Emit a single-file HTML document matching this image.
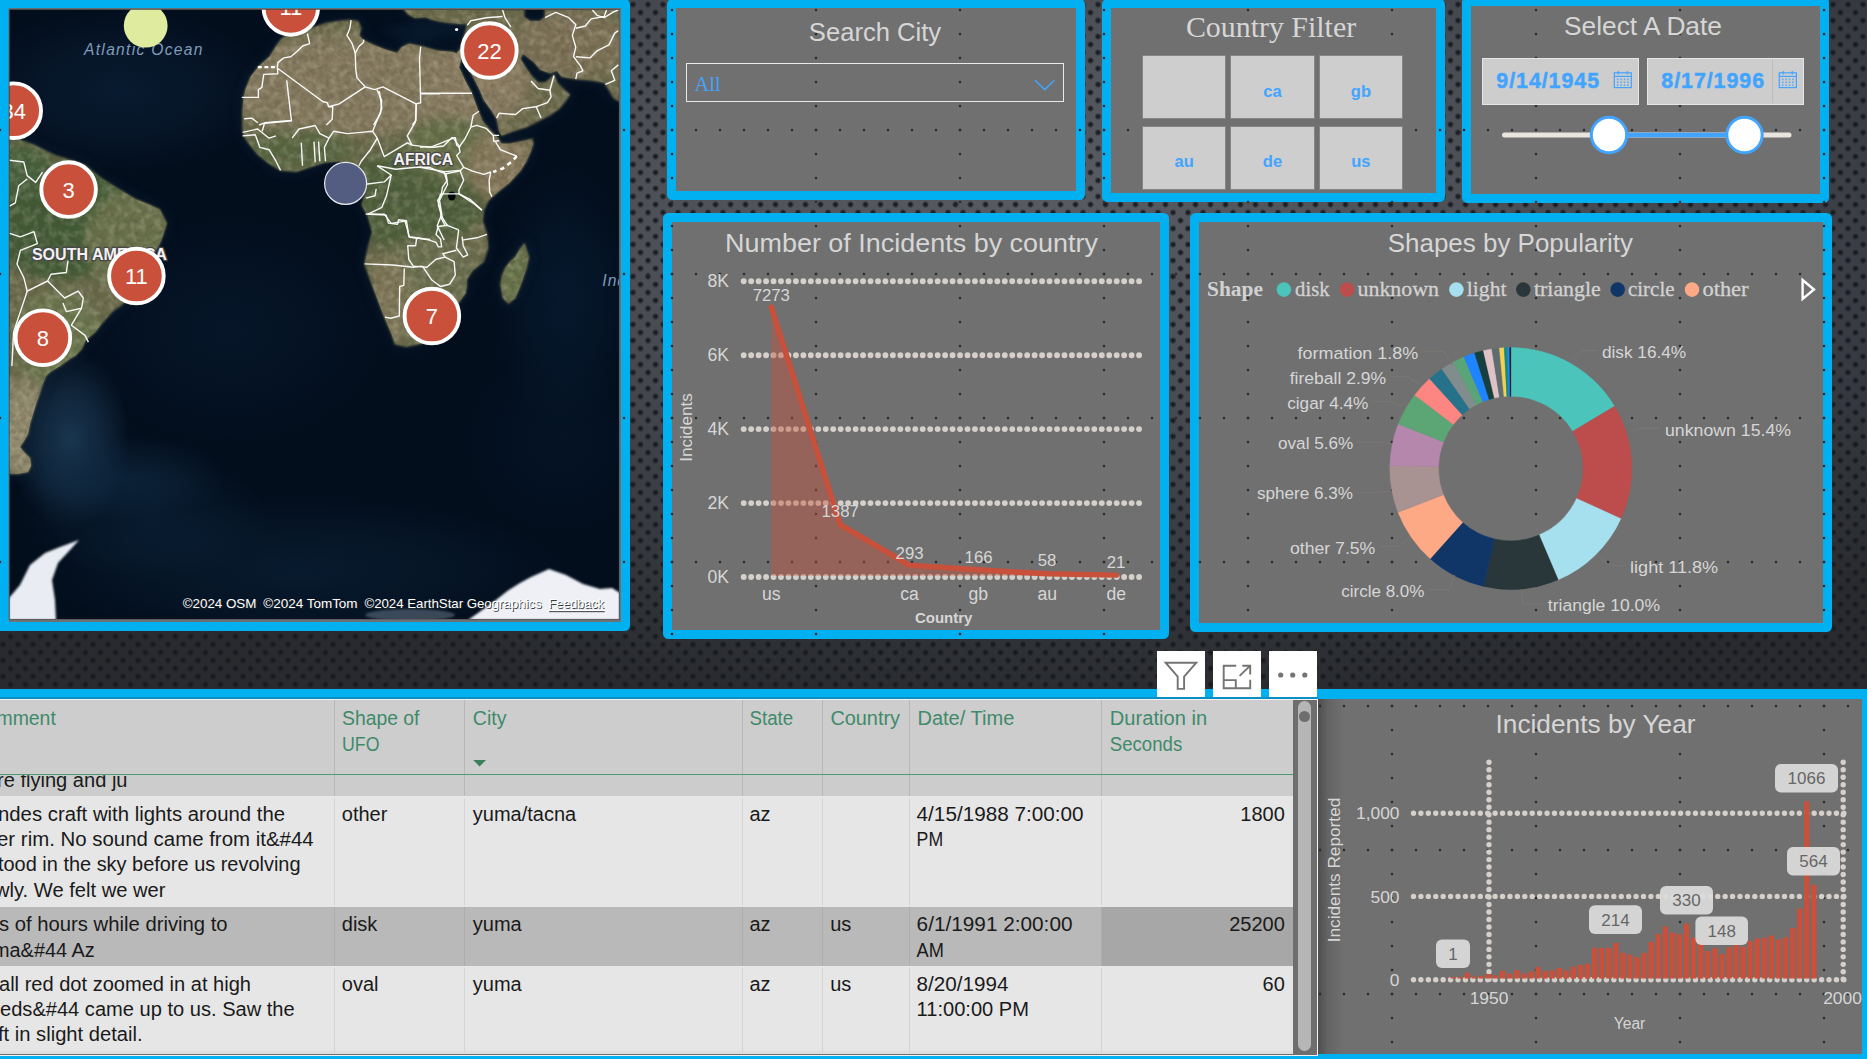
<!DOCTYPE html>
<html lang="en"><head><meta charset="utf-8"><title>UFO Sightings Dashboard</title>
<style>
html,body{margin:0;padding:0}
body{width:1867px;height:1059px;overflow:hidden;position:relative;background:#33363b;font-family:"Liberation Sans",sans-serif;color:#d8d8d8}
.abs{position:absolute}
.bg{position:absolute;left:0;top:0;width:1867px;height:1059px;
 background:
  radial-gradient(circle at 3px 4.5px,rgba(22,25,30,.95) 0,rgba(22,25,30,.86) 1.5px,rgba(22,25,30,0) 3.6px),
  radial-gradient(circle at 10.5px 12.5px,rgba(22,25,30,.95) 0,rgba(22,25,30,.86) 1.5px,rgba(22,25,30,0) 3.6px),
  radial-gradient(ellipse 1250px 520px at 1050px 190px,#585b61 0,#4c4f55 35%,#383b41 70%,#282a2e 100%);
 background-size:15px 16px,15px 16px,100% 100%;}
.panel{position:absolute;box-sizing:border-box;background:#707070;border:9.5px solid #00b0f0;border-radius:5.5px}
.grid{position:absolute;left:0;top:0;width:1867px;height:1059px;pointer-events:none;
 background:
  radial-gradient(circle at 96px 10px,#2b2b2b 0,#2b2b2b 0.85px,rgba(43,43,43,0) 1.7px),
  radial-gradient(circle at 12px 130px,#2b2b2b 0,#2b2b2b 0.85px,rgba(43,43,43,0) 1.7px);
 background-size:144px 24px,24px 144px;background-position:0 0,-12px 0}
.t{position:absolute;white-space:nowrap;color:#d6d6d6;line-height:1}
.serif{font-family:"Liberation Serif",serif}
svg{position:absolute;left:0;top:0;overflow:visible}
svg text{font-family:"Liberation Sans",sans-serif}
</style></head><body>
<div class="bg"></div>
<div class="panel" style="left:-10px;top:-0.9px;width:639.5px;height:631.4px;border-left-width:19.6px"></div>
<div class="panel" style="left:666.5px;top:-1.4px;width:418.5px;height:200.9px"></div>
<div class="panel" style="left:1101.5px;top:-1.4px;width:343.0px;height:202.9px"></div>
<div class="panel" style="left:1461.5px;top:-2.8px;width:367.8px;height:205.8px"></div>
<div class="panel" style="left:662.5px;top:213.3px;width:506.5px;height:425.7px"></div>
<div class="panel" style="left:1190px;top:213.3px;width:642.2px;height:418.7px"></div>
<div class="abs" style="left:0;top:688.5px;width:1867px;height:371px;background:#00b0f0"></div>
<div class="abs" style="left:1318px;top:698.5px;width:544px;height:355.8px;background:linear-gradient(90deg,#4e4e4e 0,#646464 10px,#707070 26px)"></div>
<div class="grid"></div>
<div class="t" style="left:675px;top:17px;width:400px;text-align:center;font-size:25.6px;line-height:30px">Search City</div>
<div class="abs" style="left:686px;top:62.5px;width:378px;height:39px;box-sizing:border-box;border:1.5px solid #e9e9e9"></div>
<div class="t serif" style="left:694.5px;top:72px;font-size:20.5px;line-height:24px;color:#41a4ff">All</div>
<svg width="1867" height="220"><polyline points="1035,80.3 1044.7,89.6 1054.4,80.3" fill="none" stroke="#41a4ff" stroke-width="1.5"/></svg>
<div class="t serif" style="left:1108.5px;top:8.6px;width:325px;text-align:center;font-size:29.9px;line-height:36px">Country Filter</div>
<div class="abs" style="left:1141.8px;top:54.5px;width:84.6px;height:64.5px;box-sizing:border-box;border:1px solid #878583;background:#cecece;color:#41a4ff;font-weight:bold;font-size:16.5px;text-align:center;line-height:20px;padding-top:25px"></div>
<div class="abs" style="left:1229.7px;top:54.5px;width:85.6px;height:64.5px;box-sizing:border-box;border:1px solid #878583;background:#cecece;color:#41a4ff;font-weight:bold;font-size:16.5px;text-align:center;line-height:20px;padding-top:25px">ca</div>
<div class="abs" style="left:1318.9px;top:54.5px;width:84.0px;height:64.5px;box-sizing:border-box;border:1px solid #878583;background:#cecece;color:#41a4ff;font-weight:bold;font-size:16.5px;text-align:center;line-height:20px;padding-top:25px">gb</div>
<div class="abs" style="left:1141.8px;top:125.9px;width:84.6px;height:64.1px;box-sizing:border-box;border:1px solid #878583;background:#cecece;color:#41a4ff;font-weight:bold;font-size:16.5px;text-align:center;line-height:20px;padding-top:24px">au</div>
<div class="abs" style="left:1229.7px;top:125.9px;width:85.6px;height:64.1px;box-sizing:border-box;border:1px solid #878583;background:#cecece;color:#41a4ff;font-weight:bold;font-size:16.5px;text-align:center;line-height:20px;padding-top:24px">de</div>
<div class="abs" style="left:1318.9px;top:125.9px;width:84.0px;height:64.1px;box-sizing:border-box;border:1px solid #878583;background:#cecece;color:#41a4ff;font-weight:bold;font-size:16.5px;text-align:center;line-height:20px;padding-top:24px">us</div>
<div class="t" style="left:1471px;top:11px;width:344px;text-align:center;font-size:26.3px;line-height:30px">Select A Date</div>
<div class="abs" style="left:1482px;top:57.8px;width:157.0px;height:47.2px;box-sizing:border-box;border:1.5px solid #e6e6e6;background:#cdcdcd"></div>
<div class="t" style="left:1496.3px;top:68px;font-size:21.4px;line-height:26px;font-weight:bold;letter-spacing:0.95px;-webkit-text-stroke:0.45px #41a4ff;color:#41a4ff">9/14/1945</div>
<div class="abs" style="left:1647px;top:57.8px;width:157.3px;height:47.2px;box-sizing:border-box;border:1.5px solid #e6e6e6;background:#cdcdcd"></div>
<div class="t" style="left:1661.3px;top:68px;font-size:21.4px;line-height:26px;font-weight:bold;letter-spacing:0.95px;-webkit-text-stroke:0.45px #41a4ff;color:#41a4ff">8/17/1996</div>
<div class="abs" style="left:1772px;top:59.3px;width:1px;height:44.2px;background:#bdbdbd"></div>
<svg width="1867" height="220"><g stroke="#41a4ff" fill="none" stroke-width="1.2"><rect x="1614.3" y="72.8" width="17" height="14.8"/><line x1="1614.3" y1="76.4" x2="1631.3" y2="76.4"/><line x1="1618.3" y1="71" x2="1618.3" y2="74.6"/><line x1="1627.3" y1="71" x2="1627.3" y2="74.6"/></g><rect x="1616.9" y="78.6" width="1.6" height="1.6" fill="#41a4ff" opacity=".85"/><rect x="1620.3" y="78.6" width="1.6" height="1.6" fill="#41a4ff" opacity=".85"/><rect x="1623.7" y="78.6" width="1.6" height="1.6" fill="#41a4ff" opacity=".85"/><rect x="1627.1" y="78.6" width="1.6" height="1.6" fill="#41a4ff" opacity=".85"/><rect x="1616.9" y="81.5" width="1.6" height="1.6" fill="#41a4ff" opacity=".85"/><rect x="1620.3" y="81.5" width="1.6" height="1.6" fill="#41a4ff" opacity=".85"/><rect x="1623.7" y="81.5" width="1.6" height="1.6" fill="#41a4ff" opacity=".85"/><rect x="1627.1" y="81.5" width="1.6" height="1.6" fill="#41a4ff" opacity=".85"/><rect x="1616.9" y="84.4" width="1.6" height="1.6" fill="#41a4ff" opacity=".85"/><rect x="1620.3" y="84.4" width="1.6" height="1.6" fill="#41a4ff" opacity=".85"/><rect x="1623.7" y="84.4" width="1.6" height="1.6" fill="#41a4ff" opacity=".85"/><rect x="1627.1" y="84.4" width="1.6" height="1.6" fill="#41a4ff" opacity=".85"/><g stroke="#41a4ff" fill="none" stroke-width="1.2"><rect x="1779.3" y="72.8" width="17" height="14.8"/><line x1="1779.3" y1="76.4" x2="1796.3" y2="76.4"/><line x1="1783.3" y1="71" x2="1783.3" y2="74.6"/><line x1="1792.3" y1="71" x2="1792.3" y2="74.6"/></g><rect x="1781.9" y="78.6" width="1.6" height="1.6" fill="#41a4ff" opacity=".85"/><rect x="1785.3" y="78.6" width="1.6" height="1.6" fill="#41a4ff" opacity=".85"/><rect x="1788.7" y="78.6" width="1.6" height="1.6" fill="#41a4ff" opacity=".85"/><rect x="1792.1" y="78.6" width="1.6" height="1.6" fill="#41a4ff" opacity=".85"/><rect x="1781.9" y="81.5" width="1.6" height="1.6" fill="#41a4ff" opacity=".85"/><rect x="1785.3" y="81.5" width="1.6" height="1.6" fill="#41a4ff" opacity=".85"/><rect x="1788.7" y="81.5" width="1.6" height="1.6" fill="#41a4ff" opacity=".85"/><rect x="1792.1" y="81.5" width="1.6" height="1.6" fill="#41a4ff" opacity=".85"/><rect x="1781.9" y="84.4" width="1.6" height="1.6" fill="#41a4ff" opacity=".85"/><rect x="1785.3" y="84.4" width="1.6" height="1.6" fill="#41a4ff" opacity=".85"/><rect x="1788.7" y="84.4" width="1.6" height="1.6" fill="#41a4ff" opacity=".85"/><rect x="1792.1" y="84.4" width="1.6" height="1.6" fill="#41a4ff" opacity=".85"/><line x1="1504.5" y1="135" x2="1789" y2="135" stroke="#e9e4dd" stroke-width="5" stroke-linecap="round"/><line x1="1609" y1="135" x2="1744.5" y2="135" stroke="#41a4ff" stroke-width="4.6"/><circle cx="1609" cy="135" r="17.7" fill="#ffffff" stroke="#41a4ff" stroke-width="3"/><circle cx="1744.5" cy="135" r="17.7" fill="#ffffff" stroke="#41a4ff" stroke-width="3"/></svg>
<svg width="1867" height="700"><line x1="743.7" y1="577.0" x2="1143" y2="577.0" stroke="#d5d0c9" stroke-width="5.9" stroke-linecap="round" stroke-dasharray="0 7.46"/><text x="729" y="582.9" text-anchor="end" font-size="17.6" fill="#d6d6d6">0K</text><line x1="743.7" y1="503.1" x2="1143" y2="503.1" stroke="#d5d0c9" stroke-width="5.9" stroke-linecap="round" stroke-dasharray="0 7.46"/><text x="729" y="509.0" text-anchor="end" font-size="17.6" fill="#d6d6d6">2K</text><line x1="743.7" y1="429.1" x2="1143" y2="429.1" stroke="#d5d0c9" stroke-width="5.9" stroke-linecap="round" stroke-dasharray="0 7.46"/><text x="729" y="435.0" text-anchor="end" font-size="17.6" fill="#d6d6d6">4K</text><line x1="743.7" y1="355.2" x2="1143" y2="355.2" stroke="#d5d0c9" stroke-width="5.9" stroke-linecap="round" stroke-dasharray="0 7.46"/><text x="729" y="361.09999999999997" text-anchor="end" font-size="17.6" fill="#d6d6d6">6K</text><line x1="743.7" y1="281.3" x2="1143" y2="281.3" stroke="#d5d0c9" stroke-width="5.9" stroke-linecap="round" stroke-dasharray="0 7.46"/><text x="729" y="287.2" text-anchor="end" font-size="17.6" fill="#d6d6d6">8K</text><polygon points="771.3,575.8 771.3,307.1 840.3,524.6 909.3,565.1 978.3,569.8 1047.3,573.8 1116.3,575.1 1116.3,575.8" fill="#c9503a" fill-opacity="0.42"/><polyline points="771.3,307.1 840.3,524.6 909.3,565.1 978.3,569.8 1047.3,573.8 1116.3,575.1" fill="none" stroke="#c9503a" stroke-width="5.4" stroke-linecap="round" stroke-linejoin="round"/><text x="771.3" y="300.7" text-anchor="middle" font-size="16.8" fill="#d6d6d6">7273</text><text x="840.2" y="517.4" text-anchor="middle" font-size="16.8" fill="#d6d6d6">1387</text><text x="909.6" y="558.9" text-anchor="middle" font-size="16.8" fill="#d6d6d6">293</text><text x="978.6" y="563" text-anchor="middle" font-size="16.8" fill="#d6d6d6">166</text><text x="1047" y="566.4" text-anchor="middle" font-size="16.8" fill="#d6d6d6">58</text><text x="1116" y="568.4" text-anchor="middle" font-size="16.8" fill="#d6d6d6">21</text><text x="771.3" y="599.9" text-anchor="middle" font-size="17.6" fill="#d6d6d6">us</text><text x="909.6" y="599.9" text-anchor="middle" font-size="17.6" fill="#d6d6d6">ca</text><text x="978.3" y="599.9" text-anchor="middle" font-size="17.6" fill="#d6d6d6">gb</text><text x="1047.3" y="599.9" text-anchor="middle" font-size="17.6" fill="#d6d6d6">au</text><text x="1116.3" y="599.9" text-anchor="middle" font-size="17.6" fill="#d6d6d6">de</text><text x="943.7" y="622.6" text-anchor="middle" font-size="15" font-weight="bold" fill="#d6d6d6">Country</text><text transform="translate(691.5,427.5) rotate(-90)" text-anchor="middle" font-size="16" textLength="68.6" lengthAdjust="spacingAndGlyphs" fill="#d6d6d6">Incidents</text><text x="911.5" y="251.6" text-anchor="middle" font-size="26" textLength="373" lengthAdjust="spacingAndGlyphs" fill="#d6d6d6">Number of Incidents by country</text></svg>
<svg width="1867" height="700"><path d="M1510.80,347.50 A121.0,121.0 0 0 1 1614.56,406.25 L1572.80,431.31 A72.3,72.3 0 0 0 1510.80,396.20 Z" fill="#4bc4bb" stroke="#4bc4bb" stroke-width="0.4"/><path d="M1614.56,406.25 A121.0,121.0 0 0 1 1620.92,518.64 L1576.60,498.46 A72.3,72.3 0 0 0 1572.80,431.31 Z" fill="#bc4d4c" stroke="#bc4d4c" stroke-width="0.4"/><path d="M1620.92,518.64 A121.0,121.0 0 0 1 1558.16,579.85 L1539.10,535.03 A72.3,72.3 0 0 0 1576.60,498.46 Z" fill="#a6e0ee" stroke="#a6e0ee" stroke-width="0.4"/><path d="M1558.16,579.85 A121.0,121.0 0 0 1 1483.66,586.42 L1494.59,538.96 A72.3,72.3 0 0 0 1539.10,535.03 Z" fill="#29363a" stroke="#29363a" stroke-width="0.4"/><path d="M1483.66,586.42 A121.0,121.0 0 0 1 1430.21,558.76 L1462.65,522.43 A72.3,72.3 0 0 0 1494.59,538.96 Z" fill="#103668" stroke="#103668" stroke-width="0.4"/><path d="M1430.21,558.76 A121.0,121.0 0 0 1 1398.02,512.34 L1443.41,494.69 A72.3,72.3 0 0 0 1462.65,522.43 Z" fill="#fea985" stroke="#fea985" stroke-width="0.4"/><path d="M1398.02,512.34 A121.0,121.0 0 0 1 1389.84,465.46 L1438.52,466.68 A72.3,72.3 0 0 0 1443.41,494.69 Z" fill="#a89292" stroke="#a89292" stroke-width="0.4"/><path d="M1389.84,465.46 A121.0,121.0 0 0 1 1398.30,423.96 L1443.58,441.88 A72.3,72.3 0 0 0 1438.52,466.68 Z" fill="#b687ad" stroke="#b687ad" stroke-width="0.4"/><path d="M1398.30,423.96 A121.0,121.0 0 0 1 1414.73,394.94 L1453.39,424.55 A72.3,72.3 0 0 0 1443.58,441.88 Z" fill="#5ca575" stroke="#5ca575" stroke-width="0.4"/><path d="M1414.73,394.94 A121.0,121.0 0 0 1 1429.65,378.75 L1462.31,414.87 A72.3,72.3 0 0 0 1453.39,424.55 Z" fill="#fd8683" stroke="#fd8683" stroke-width="0.4"/><path d="M1429.65,378.75 A121.0,121.0 0 0 1 1441.88,369.04 L1469.62,409.07 A72.3,72.3 0 0 0 1462.31,414.87 Z" fill="#26728a" stroke="#26728a" stroke-width="0.4"/><path d="M1441.88,369.04 A121.0,121.0 0 0 1 1453.58,361.88 L1476.61,404.79 A72.3,72.3 0 0 0 1469.62,409.07 Z" fill="#818c8c" stroke="#818c8c" stroke-width="0.4"/><path d="M1453.58,361.88 A121.0,121.0 0 0 1 1464.07,356.89 L1482.88,401.81 A72.3,72.3 0 0 0 1476.61,404.79 Z" fill="#5aa577" stroke="#5aa577" stroke-width="0.4"/><path d="M1464.07,356.89 A121.0,121.0 0 0 1 1474.58,353.05 L1489.16,399.52 A72.3,72.3 0 0 0 1482.88,401.81 Z" fill="#1e84ff" stroke="#1e84ff" stroke-width="0.4"/><path d="M1474.58,353.05 A121.0,121.0 0 0 1 1483.33,350.66 L1494.39,398.09 A72.3,72.3 0 0 0 1489.16,399.52 Z" fill="#173f3d" stroke="#173f3d" stroke-width="0.4"/><path d="M1483.33,350.66 A121.0,121.0 0 0 1 1491.83,349.00 L1499.46,397.09 A72.3,72.3 0 0 0 1494.39,398.09 Z" fill="#dfc2c6" stroke="#dfc2c6" stroke-width="0.4"/><path d="M1491.83,349.00 A121.0,121.0 0 0 1 1499.37,348.04 L1503.97,396.52 A72.3,72.3 0 0 0 1499.46,397.09 Z" fill="#5f6c70" stroke="#5f6c70" stroke-width="0.4"/><path d="M1499.37,348.04 A121.0,121.0 0 0 1 1504.21,347.68 L1506.86,396.31 A72.3,72.3 0 0 0 1503.97,396.52 Z" fill="#f2d054" stroke="#f2d054" stroke-width="0.4"/><path d="M1504.21,347.68 A121.0,121.0 0 0 1 1507.38,347.55 L1508.76,396.23 A72.3,72.3 0 0 0 1506.86,396.31 Z" fill="#148a7c" stroke="#148a7c" stroke-width="0.4"/><path d="M1507.38,347.55 A121.0,121.0 0 0 1 1509.70,347.50 L1510.14,396.20 A72.3,72.3 0 0 0 1508.76,396.23 Z" fill="#1a8cff" stroke="#1a8cff" stroke-width="0.4"/><path d="M1509.70,347.50 A121.0,121.0 0 0 1 1510.80,347.50 L1510.80,396.20 A72.3,72.3 0 0 0 1510.14,396.20 Z" fill="#111111" stroke="#111111" stroke-width="0.4"/><polyline points="1572.8,359.6 1581.1,350.5 1597.7,350.5" fill="none" stroke="#7b7774" stroke-width="1"/><polyline points="1631.0,431.5 1641.3,428.2 1660.0,428.2" fill="none" stroke="#7b7774" stroke-width="1"/><polyline points="1599.8,558.3 1610.2,565.8 1626.8,565.8" fill="none" stroke="#7b7774" stroke-width="1"/><polyline points="1521.6,589.5 1522.9,604.0 1543.7,604.0" fill="none" stroke="#7b7774" stroke-width="1"/><polyline points="1454.3,574.9 1449.3,589.5 1428.5,589.5" fill="none" stroke="#7b7774" stroke-width="1"/><polyline points="1407.8,539.6 1398.2,546.6 1379.5,546.6" fill="none" stroke="#7b7774" stroke-width="1"/><polyline points="1389.9,491.0 1375.3,492.6 1356.6,492.6" fill="none" stroke="#7b7774" stroke-width="1"/><polyline points="1392.0,444.0 1375.3,441.9 1356.6,441.9" fill="none" stroke="#7b7774" stroke-width="1"/><polyline points="1402.4,406.6 1389.9,401.6 1372.0,401.6" fill="none" stroke="#7b7774" stroke-width="1"/><polyline points="1420.2,384.6 1407.8,376.7 1389.9,376.7" fill="none" stroke="#7b7774" stroke-width="1"/><polyline points="1452.2,365.0 1443.9,351.3 1422.3,351.3" fill="none" stroke="#7b7774" stroke-width="1"/><text x="1601.9" y="357.5" font-size="16.8" textLength="84.3" lengthAdjust="spacingAndGlyphs" fill="#d6d6d6">disk 16.4%</text><text x="1665" y="435.7" font-size="16.8" textLength="126.0" lengthAdjust="spacingAndGlyphs" fill="#d6d6d6">unknown 15.4%</text><text x="1630.1" y="572.8" font-size="16.8" textLength="88.1" lengthAdjust="spacingAndGlyphs" fill="#d6d6d6">light 11.8%</text><text x="1547.8" y="611" font-size="16.8" textLength="112.2" lengthAdjust="spacingAndGlyphs" fill="#d6d6d6">triangle 10.0%</text><text x="1341.3" y="597" font-size="16.8" textLength="83.1" lengthAdjust="spacingAndGlyphs" fill="#d6d6d6">circle 8.0%</text><text x="1290" y="554" font-size="16.8" textLength="85.3" lengthAdjust="spacingAndGlyphs" fill="#d6d6d6">other 7.5%</text><text x="1257" y="499.3" font-size="16.8" textLength="96.0" lengthAdjust="spacingAndGlyphs" fill="#d6d6d6">sphere 6.3%</text><text x="1278" y="449" font-size="16.8" textLength="75.3" lengthAdjust="spacingAndGlyphs" fill="#d6d6d6">oval 5.6%</text><text x="1287.2" y="408.7" font-size="16.8" textLength="81.1" lengthAdjust="spacingAndGlyphs" fill="#d6d6d6">cigar 4.4%</text><text x="1289.7" y="383.7" font-size="16.8" textLength="96.5" lengthAdjust="spacingAndGlyphs" fill="#d6d6d6">fireball 2.9%</text><text x="1297.6" y="358.8" font-size="16.8" textLength="120.6" lengthAdjust="spacingAndGlyphs" fill="#d6d6d6">formation 1.8%</text><text x="1207" y="295.5" font-size="20.5" font-weight="bold" textLength="56" lengthAdjust="spacingAndGlyphs" fill="#d2d2d2" style="font-family:'Liberation Serif',serif">Shape</text><circle cx="1283.9" cy="289.6" r="7.3" fill="#4bc4bb"/><text x="1295.1" y="296" font-size="21" textLength="34.5" lengthAdjust="spacingAndGlyphs" fill="#d2d2d2" stroke="#d2d2d2" stroke-width=".3" style="font-family:'Liberation Serif',serif">disk</text><circle cx="1347" cy="289.6" r="7.3" fill="#bc4d4c"/><text x="1357.5" y="296" font-size="21" textLength="81.5" lengthAdjust="spacingAndGlyphs" fill="#d2d2d2" stroke="#d2d2d2" stroke-width=".3" style="font-family:'Liberation Serif',serif">unknown</text><circle cx="1456.4" cy="289.6" r="7.3" fill="#a6e0ee"/><text x="1466.8" y="296" font-size="21" textLength="39.7" lengthAdjust="spacingAndGlyphs" fill="#d2d2d2" stroke="#d2d2d2" stroke-width=".3" style="font-family:'Liberation Serif',serif">light</text><circle cx="1523.3" cy="289.6" r="7.3" fill="#29363a"/><text x="1534" y="296" font-size="21" textLength="66.7" lengthAdjust="spacingAndGlyphs" fill="#d2d2d2" stroke="#d2d2d2" stroke-width=".3" style="font-family:'Liberation Serif',serif">triangle</text><circle cx="1617.7" cy="289.6" r="7.3" fill="#103668"/><text x="1628" y="296" font-size="21" textLength="46.5" lengthAdjust="spacingAndGlyphs" fill="#d2d2d2" stroke="#d2d2d2" stroke-width=".3" style="font-family:'Liberation Serif',serif">circle</text><circle cx="1692" cy="289.6" r="7.3" fill="#fea985"/><text x="1702.4" y="296" font-size="21" textLength="46.2" lengthAdjust="spacingAndGlyphs" fill="#d2d2d2" stroke="#d2d2d2" stroke-width=".3" style="font-family:'Liberation Serif',serif">other</text><path d="M1802.6,280 L1814,289.5 L1802.6,299 Z" fill="none" stroke="#ffffff" stroke-width="2.4" stroke-linejoin="miter"/><text x="1510.4" y="251.6" text-anchor="middle" font-size="26" textLength="245.3" lengthAdjust="spacingAndGlyphs" fill="#d6d6d6">Shapes by Popularity</text></svg>
<div class="abs" style="left:0;top:697.2px;width:1318px;height:1.4px;background:#0a8fc5"></div>
<div class="abs" style="left:-2px;top:698.6px;width:1320.2px;height:357px;box-sizing:border-box;border:1.6px solid #f2f2f2;background:#6e6e6e"></div>
<div class="abs" style="left:0;top:700.2px;width:1293.2px;height:73.8px;background:#cdcdcd"></div>
<div class="abs" style="left:0;top:774.0px;width:1293.2px;height:22.0px;background:#cccccc"></div>
<div class="abs" style="left:0;top:796.0px;width:1293.2px;height:110.8px;background:#e6e6e6"></div>
<div class="abs" style="left:0;top:906.8px;width:1293.2px;height:58.9px;background:#b9b9b9"></div>
<div class="abs" style="left:0;top:965.7px;width:1293.2px;height:88.3px;background:#e6e6e6"></div>
<div class="abs" style="left:1101.4px;top:906.8px;width:191.8px;height:58.9px;background:#a7a7a7"></div>
<div class="abs" style="left:0;top:1050.5px;width:1293.2px;height:3.5px;background:#dedede"></div>
<div class="abs" style="left:333.9px;top:700.2px;width:1px;height:96px;background:#b7b7b7"></div>
<div class="abs" style="left:333.9px;top:799px;width:1px;height:106px;background:#d3d3d3"></div>
<div class="abs" style="left:333.9px;top:906.8px;width:1px;height:58.9px;background:#adadad"></div>
<div class="abs" style="left:333.9px;top:968px;width:1px;height:84px;background:#d3d3d3"></div>
<div class="abs" style="left:463.7px;top:700.2px;width:1px;height:96px;background:#b7b7b7"></div>
<div class="abs" style="left:463.7px;top:799px;width:1px;height:106px;background:#d3d3d3"></div>
<div class="abs" style="left:463.7px;top:906.8px;width:1px;height:58.9px;background:#adadad"></div>
<div class="abs" style="left:463.7px;top:968px;width:1px;height:84px;background:#d3d3d3"></div>
<div class="abs" style="left:741.5px;top:700.2px;width:1px;height:96px;background:#b7b7b7"></div>
<div class="abs" style="left:741.5px;top:799px;width:1px;height:106px;background:#d3d3d3"></div>
<div class="abs" style="left:741.5px;top:906.8px;width:1px;height:58.9px;background:#adadad"></div>
<div class="abs" style="left:741.5px;top:968px;width:1px;height:84px;background:#d3d3d3"></div>
<div class="abs" style="left:822.0px;top:700.2px;width:1px;height:96px;background:#b7b7b7"></div>
<div class="abs" style="left:822.0px;top:799px;width:1px;height:106px;background:#d3d3d3"></div>
<div class="abs" style="left:822.0px;top:906.8px;width:1px;height:58.9px;background:#adadad"></div>
<div class="abs" style="left:822.0px;top:968px;width:1px;height:84px;background:#d3d3d3"></div>
<div class="abs" style="left:909.0px;top:700.2px;width:1px;height:96px;background:#b7b7b7"></div>
<div class="abs" style="left:909.0px;top:799px;width:1px;height:106px;background:#d3d3d3"></div>
<div class="abs" style="left:909.0px;top:906.8px;width:1px;height:58.9px;background:#adadad"></div>
<div class="abs" style="left:909.0px;top:968px;width:1px;height:84px;background:#d3d3d3"></div>
<div class="abs" style="left:1100.9px;top:700.2px;width:1px;height:96px;background:#b7b7b7"></div>
<div class="abs" style="left:1100.9px;top:799px;width:1px;height:106px;background:#d3d3d3"></div>
<div class="abs" style="left:1100.9px;top:906.8px;width:1px;height:58.9px;background:#adadad"></div>
<div class="abs" style="left:1100.9px;top:968px;width:1px;height:84px;background:#d3d3d3"></div>
<div class="abs" style="left:0;top:773.8px;width:1293.2px;height:1.3px;background:#4f9b6f"></div>
<div class="abs" style="left:1298px;top:700.5px;width:13.4px;height:350px;background:#b6b6b6;border-radius:6.5px"></div>
<div class="abs" style="left:1299.2px;top:710.6px;width:11px;height:11px;background:#6e6e6e;border-radius:50%"></div>
<svg width="1294" height="1059" viewBox="0 0 1294 1059" style="overflow:hidden"><defs><clipPath id="r1clip"><rect x="0" y="775.2" width="1294" height="30"/></clipPath></defs><text x="-3.5" y="724.8" font-size="19.4" fill="#3f8a6a" textLength="59.3" lengthAdjust="spacingAndGlyphs">mment</text><text x="342" y="724.8" font-size="19.4" fill="#3f8a6a" textLength="77.5" lengthAdjust="spacingAndGlyphs">Shape of</text><text x="342" y="751.3" font-size="19.4" fill="#3f8a6a" textLength="37.5" lengthAdjust="spacingAndGlyphs">UFO</text><text x="472.8" y="724.8" font-size="19.4" fill="#3f8a6a" textLength="33.7" lengthAdjust="spacingAndGlyphs">City</text><text x="749.6" y="724.8" font-size="19.4" fill="#3f8a6a" textLength="43.6" lengthAdjust="spacingAndGlyphs">State</text><text x="830.4" y="724.8" font-size="19.4" fill="#3f8a6a" textLength="69.6" lengthAdjust="spacingAndGlyphs">Country</text><text x="917.4" y="724.8" font-size="19.4" fill="#3f8a6a" textLength="97.0" lengthAdjust="spacingAndGlyphs">Date/ Time</text><text x="1109.8" y="724.8" font-size="19.4" fill="#3f8a6a" textLength="97.3" lengthAdjust="spacingAndGlyphs">Duration in</text><text x="1109.8" y="751.3" font-size="19.4" fill="#3f8a6a" textLength="72.4" lengthAdjust="spacingAndGlyphs">Seconds</text><path d="M473.2,760 L486,760 L479.6,766.4 Z" fill="#3d7f5c"/><text x="-3" y="786.8" font-size="20" fill="#1a1a1a" textLength="130.5" lengthAdjust="spacingAndGlyphs" clip-path="url(#r1clip)">re flying and ju</text><text x="-2" y="821" font-size="20" fill="#1a1a1a" textLength="287.0" lengthAdjust="spacingAndGlyphs">ndes craft with lights around the</text><text x="-3" y="846.4" font-size="20" fill="#1a1a1a" textLength="316.6" lengthAdjust="spacingAndGlyphs">er rim. No sound came from it&amp;#44</text><text x="-2" y="871.4" font-size="20" fill="#1a1a1a" textLength="302.5" lengthAdjust="spacingAndGlyphs">tood in the sky before us revolving</text><text x="-5" y="896.6" font-size="20" fill="#1a1a1a" textLength="170.4" lengthAdjust="spacingAndGlyphs">wly. We felt we wer</text><text x="-1" y="931.3" font-size="20" fill="#1a1a1a" textLength="228.6" lengthAdjust="spacingAndGlyphs">s of hours while driving to</text><text x="-7" y="956.5" font-size="20" fill="#1a1a1a" textLength="101.7" lengthAdjust="spacingAndGlyphs">ma&amp;#44 Az</text><text x="-1" y="991" font-size="20" fill="#1a1a1a" textLength="252.0" lengthAdjust="spacingAndGlyphs">all red dot zoomed in at high</text><text x="0" y="1016.2" font-size="20" fill="#1a1a1a" textLength="294.7" lengthAdjust="spacingAndGlyphs">eds&amp;#44 came up to us. Saw the</text><text x="-2" y="1040.8" font-size="20" fill="#1a1a1a" textLength="144.6" lengthAdjust="spacingAndGlyphs">ft in slight detail.</text><text x="341.8" y="821" font-size="20" fill="#1a1a1a" text-anchor="start">other</text><text x="472.8" y="821" font-size="20" fill="#1a1a1a" text-anchor="start">yuma/tacna</text><text x="749.4" y="821" font-size="20" fill="#1a1a1a" text-anchor="start">az</text><text x="916.6" y="821" font-size="20" fill="#1a1a1a" textLength="167" lengthAdjust="spacingAndGlyphs">4/15/1988 7:00:00</text><text x="916.6" y="846.2" font-size="20" fill="#1a1a1a" textLength="26.5" lengthAdjust="spacingAndGlyphs">PM</text><text x="1284.8" y="821" font-size="20" fill="#1a1a1a" text-anchor="end">1800</text><text x="341.8" y="931.3" font-size="20" fill="#1a1a1a" text-anchor="start">disk</text><text x="472.8" y="931.3" font-size="20" fill="#1a1a1a" text-anchor="start">yuma</text><text x="749.4" y="931.3" font-size="20" fill="#1a1a1a" text-anchor="start">az</text><text x="830.2" y="931.3" font-size="20" fill="#1a1a1a" text-anchor="start">us</text><text x="916.6" y="931.3" font-size="20" fill="#1a1a1a" textLength="155.9" lengthAdjust="spacingAndGlyphs">6/1/1991 2:00:00</text><text x="916.6" y="956.5" font-size="20" fill="#1a1a1a" textLength="27.3" lengthAdjust="spacingAndGlyphs">AM</text><text x="1284.8" y="931.3" font-size="20" fill="#1a1a1a" text-anchor="end">25200</text><text x="341.8" y="991" font-size="20" fill="#1a1a1a" text-anchor="start">oval</text><text x="472.8" y="991" font-size="20" fill="#1a1a1a" text-anchor="start">yuma</text><text x="749.4" y="991" font-size="20" fill="#1a1a1a" text-anchor="start">az</text><text x="830.2" y="991" font-size="20" fill="#1a1a1a" text-anchor="start">us</text><text x="916.6" y="991" font-size="20" fill="#1a1a1a" textLength="91.8" lengthAdjust="spacingAndGlyphs">8/20/1994</text><text x="916.6" y="1016.2" font-size="20" fill="#1a1a1a" textLength="112.4" lengthAdjust="spacingAndGlyphs">11:00:00 PM</text><text x="1284.8" y="991" font-size="20" fill="#1a1a1a" text-anchor="end">60</text></svg>
<div class="abs" style="left:1156.8px;top:651px;width:48.2px;height:45.8px;background:#ffffff"></div>
<div class="abs" style="left:1213px;top:651px;width:48.2px;height:45.8px;background:#ffffff"></div>
<div class="abs" style="left:1269px;top:651px;width:48.2px;height:45.8px;background:#ffffff"></div>
<svg width="1867" height="700"><g fill="none" stroke="#747474" stroke-width="1.9"><path d="M1165.6,662.7 L1196.3,662.7 L1184.1,676.6 L1184.1,688.9 L1177.7,688.9 L1177.7,676.6 Z" stroke-linejoin="miter"/><path d="M1236.2,665.8 L1223.7,665.8 L1223.7,688.2 L1250.2,688.2 L1250.2,679.7"/><path d="M1223.7,680.1 L1235.8,680.1 L1235.8,688.2"/><path d="M1239.6,675.9 L1250,665.9 M1242.3,665.8 L1250.2,665.8 L1250.2,674.5"/></g><g fill="#747474"><circle cx="1280.7" cy="675" r="2.6"/><circle cx="1292.7" cy="675" r="2.6"/><circle cx="1304.8" cy="675" r="2.6"/></g></svg>
<svg width="1867" height="1059"><line x1="1413.5" y1="979.7" x2="1844" y2="979.7" stroke="#d5d0c9" stroke-width="5.4" stroke-linecap="round" stroke-dasharray="0 7.42"/><text x="1399.5" y="985.9000000000001" text-anchor="end" font-size="17.4" fill="#d6d6d6">0</text><line x1="1413.5" y1="896.4" x2="1844" y2="896.4" stroke="#d5d0c9" stroke-width="5.4" stroke-linecap="round" stroke-dasharray="0 7.42"/><text x="1399.5" y="902.6" text-anchor="end" font-size="17.4" fill="#d6d6d6">500</text><line x1="1413.5" y1="813.2" x2="1844" y2="813.2" stroke="#d5d0c9" stroke-width="5.4" stroke-linecap="round" stroke-dasharray="0 7.42"/><text x="1399.5" y="819.4000000000001" text-anchor="end" font-size="17.4" fill="#d6d6d6">1,000</text><line x1="1489.0" y1="762.3" x2="1489.0" y2="979.7" stroke="#d5d0c9" stroke-width="5.4" stroke-linecap="round" stroke-dasharray="0 7.483"/><line x1="1843.2" y1="762.3" x2="1843.2" y2="979.7" stroke="#d5d0c9" stroke-width="5.4" stroke-linecap="round" stroke-dasharray="0 7.483"/><rect x="1450.48" y="977.00" width="5.3" height="1.50" fill="#c9503a"/><rect x="1457.56" y="977.00" width="5.3" height="1.50" fill="#c9503a"/><rect x="1464.63" y="972.80" width="5.3" height="5.70" fill="#c9503a"/><rect x="1471.70" y="976.70" width="5.3" height="1.80" fill="#c9503a"/><rect x="1478.78" y="975.90" width="5.3" height="2.60" fill="#c9503a"/><rect x="1485.85" y="974.00" width="5.3" height="4.50" fill="#c9503a"/><rect x="1492.92" y="975.20" width="5.3" height="3.30" fill="#c9503a"/><rect x="1500.00" y="970.80" width="5.3" height="7.70" fill="#c9503a"/><rect x="1507.07" y="973.50" width="5.3" height="5.00" fill="#c9503a"/><rect x="1514.14" y="970.10" width="5.3" height="8.40" fill="#c9503a"/><rect x="1521.21" y="973.50" width="5.3" height="5.00" fill="#c9503a"/><rect x="1528.29" y="971.70" width="5.3" height="6.80" fill="#c9503a"/><rect x="1535.36" y="967.00" width="5.3" height="11.50" fill="#c9503a"/><rect x="1542.43" y="971.10" width="5.3" height="7.40" fill="#c9503a"/><rect x="1549.51" y="970.30" width="5.3" height="8.20" fill="#c9503a"/><rect x="1556.58" y="967.90" width="5.3" height="10.60" fill="#c9503a"/><rect x="1563.65" y="970.50" width="5.3" height="8.00" fill="#c9503a"/><rect x="1570.73" y="966.70" width="5.3" height="11.80" fill="#c9503a"/><rect x="1577.80" y="964.80" width="5.3" height="13.70" fill="#c9503a"/><rect x="1584.87" y="963.80" width="5.3" height="14.70" fill="#c9503a"/><rect x="1591.94" y="947.90" width="5.3" height="30.60" fill="#c9503a"/><rect x="1599.02" y="947.90" width="5.3" height="30.60" fill="#c9503a"/><rect x="1606.09" y="947.90" width="5.3" height="30.60" fill="#c9503a"/><rect x="1613.16" y="942.90" width="5.3" height="35.60" fill="#c9503a"/><rect x="1620.24" y="952.80" width="5.3" height="25.70" fill="#c9503a"/><rect x="1627.31" y="954.70" width="5.3" height="23.80" fill="#c9503a"/><rect x="1634.38" y="957.20" width="5.3" height="21.30" fill="#c9503a"/><rect x="1641.46" y="952.80" width="5.3" height="25.70" fill="#c9503a"/><rect x="1648.53" y="941.90" width="5.3" height="36.60" fill="#c9503a"/><rect x="1655.60" y="934.00" width="5.3" height="44.50" fill="#c9503a"/><rect x="1662.67" y="926.50" width="5.3" height="52.00" fill="#c9503a"/><rect x="1669.75" y="932.50" width="5.3" height="46.00" fill="#c9503a"/><rect x="1676.82" y="934.20" width="5.3" height="44.30" fill="#c9503a"/><rect x="1683.89" y="923.60" width="5.3" height="54.90" fill="#c9503a"/><rect x="1690.97" y="937.70" width="5.3" height="40.80" fill="#c9503a"/><rect x="1698.04" y="938.80" width="5.3" height="39.70" fill="#c9503a"/><rect x="1705.11" y="950.90" width="5.3" height="27.60" fill="#c9503a"/><rect x="1712.19" y="948.10" width="5.3" height="30.40" fill="#c9503a"/><rect x="1719.26" y="953.90" width="5.3" height="24.60" fill="#c9503a"/><rect x="1726.33" y="947.20" width="5.3" height="31.30" fill="#c9503a"/><rect x="1733.40" y="943.70" width="5.3" height="34.80" fill="#c9503a"/><rect x="1740.48" y="946.80" width="5.3" height="31.70" fill="#c9503a"/><rect x="1747.55" y="941.10" width="5.3" height="37.40" fill="#c9503a"/><rect x="1754.62" y="938.50" width="5.3" height="40.00" fill="#c9503a"/><rect x="1761.70" y="937.70" width="5.3" height="40.80" fill="#c9503a"/><rect x="1768.77" y="935.50" width="5.3" height="43.00" fill="#c9503a"/><rect x="1775.84" y="939.50" width="5.3" height="39.00" fill="#c9503a"/><rect x="1782.92" y="937.20" width="5.3" height="41.30" fill="#c9503a"/><rect x="1789.99" y="928.10" width="5.3" height="50.40" fill="#c9503a"/><rect x="1797.06" y="908.50" width="5.3" height="70.00" fill="#c9503a"/><rect x="1804.13" y="801.30" width="5.3" height="177.20" fill="#c9503a"/><rect x="1811.21" y="884.80" width="5.3" height="93.70" fill="#c9503a"/><text x="1489" y="1003.6" text-anchor="middle" font-size="17.4" fill="#d6d6d6">1950</text><text x="1842.5" y="1003.6" text-anchor="middle" font-size="17.4" fill="#d6d6d6">2000</text><text x="1629.5" y="1029" text-anchor="middle" font-size="15.6" fill="#d6d6d6">Year</text><text transform="translate(1340,870) rotate(-90)" text-anchor="middle" font-size="16.6" textLength="144.6" lengthAdjust="spacingAndGlyphs" fill="#d6d6d6">Incidents Reported</text><text x="1595.5" y="732.5" text-anchor="middle" font-size="26" textLength="200" lengthAdjust="spacingAndGlyphs" fill="#d6d6d6">Incidents by Year</text><rect x="1775" y="764" width="63.0" height="28.6" rx="6" ry="6" fill="#dcdcdc" fill-opacity="0.93"/><text x="1806.5" y="784.4" text-anchor="middle" font-size="17" fill="#666666">1066</text><rect x="1787" y="847" width="53.0" height="28.5" rx="6" ry="6" fill="#dcdcdc" fill-opacity="0.93"/><text x="1813.5" y="867.4" text-anchor="middle" font-size="17" fill="#666666">564</text><rect x="1660" y="886" width="53.0" height="28.6" rx="6" ry="6" fill="#dcdcdc" fill-opacity="0.93"/><text x="1686.5" y="906.4" text-anchor="middle" font-size="17" fill="#666666">330</text><rect x="1695.4" y="916.4" width="52.6" height="28.6" rx="6" ry="6" fill="#dcdcdc" fill-opacity="0.93"/><text x="1721.7" y="936.8" text-anchor="middle" font-size="17" fill="#666666">148</text><rect x="1589" y="905.3" width="53.0" height="28.7" rx="6" ry="6" fill="#dcdcdc" fill-opacity="0.93"/><text x="1615.5" y="925.8" text-anchor="middle" font-size="17" fill="#666666">214</text><rect x="1436" y="939.5" width="34.0" height="28.5" rx="6" ry="6" fill="#dcdcdc" fill-opacity="0.93"/><text x="1453.0" y="959.9" text-anchor="middle" font-size="17" fill="#666666">1</text></svg>
<svg width="640" height="640" viewBox="0 0 640 640" style="overflow:hidden"><defs><clipPath id="mapclip"><rect x="9.6" y="9.8" width="609.3" height="609.2"/></clipPath><clipPath id="landclip"><path d="M281.4,39.0 L290.0,33.0 L300.0,30.0 L314.5,27.2 L326.3,23.0 L338.0,21.3 L349.9,20.0 L358.1,21.3 L361.1,28.3 L359.3,35.4 L363.4,40.1 L373.5,44.9 L385.3,49.6 L397.1,53.1 L401.8,47.2 L408.9,43.7 L420.7,46.0 L437.7,50.8 L453.0,52.0 L462.0,56.0 L459.0,67.3 L464.9,80.3 L472.0,93.3 L474.3,100.0 L477.9,109.4 L482.6,121.3 L490.8,130.7 L497.9,137.8 L501.5,143.7 L509.7,143.7 L521.5,141.3 L532.2,139.0 L533.3,143.7 L531.0,150.8 L526.3,161.4 L520.4,170.8 L509.7,182.6 L497.9,192.1 L488.5,200.4 L483.8,209.8 L482.6,221.0 L487.0,234.4 L488.1,248.0 L483.6,261.6 L472.3,270.7 L466.6,279.7 L466.6,286.5 L465.5,293.3 L458.7,302.4 L455.0,310.0 L448.0,322.0 L440.0,333.0 L430.0,340.0 L422.4,343.2 L406.5,346.6 L395.2,344.3 L390.7,331.9 L383.9,316.0 L377.0,297.9 L370.3,279.7 L364.6,263.9 L368.0,248.0 L372.5,232.0 L368.0,216.3 L362.0,205.0 L365.8,191.2 L361.2,177.3 L352.0,165.8 L338.2,161.2 L324.4,162.4 L310.5,167.0 L296.7,171.6 L280.6,170.4 L269.1,163.5 L257.6,154.3 L248.4,142.8 L243.8,135.9 L242.6,129.0 L242.6,110.5 L243.6,98.0 L245.4,89.7 L250.7,76.7 L259.0,66.1 L269.6,56.7 L275.5,47.2 Z"/><path d="M524.4,243.5 L528.9,257.0 L526.5,268.0 L523.3,277.5 L519.5,288.0 L515.3,297.9 L508.5,303.5 L502.9,297.9 L500.6,284.3 L502.0,276.0 L505.1,268.4 L510.0,262.0 L515.3,257.0 L520.0,249.0 Z"/><path d="M404.0,9.5 L408.0,14.0 L415.0,18.0 L425.0,17.0 L431.8,19.5 L440.0,21.5 L449.5,22.8 L460.0,24.0 L467.2,23.6 L466.0,30.0 L463.0,40.0 L461.0,48.0 L457.0,53.0 L464.0,60.0 L467.2,66.0 L473.1,76.7 L480.2,91.0 L483.8,100.0 L490.8,109.4 L496.7,118.9 L499.1,130.7 L501.5,135.4 L514.5,130.7 L526.3,127.2 L538.1,121.3 L549.9,115.3 L559.3,108.6 L565.2,101.5 L569.9,94.5 L564.0,89.7 L557.0,82.6 L554.0,74.4 L551.0,77.9 L545.1,82.6 L538.1,82.6 L532.2,76.7 L526.3,68.5 L520.4,59.0 L522.0,55.0 L523.9,54.3 L533.3,61.4 L540.4,69.7 L549.9,73.2 L557.0,70.8 L561.7,76.7 L575.8,79.1 L591.2,80.3 L604.2,82.6 L608.9,89.7 L613.6,98.0 L620.0,101.5 L620.0,9.5 L545.0,9.5 L545.0,17.0 L540.0,21.0 L530.0,21.0 L524.0,17.0 L524.0,9.5 Z"/><path d="M9.0,138.0 L20.0,140.0 L34.0,145.0 L54.4,155.2 L70.0,160.0 L85.0,165.4 L102.0,179.0 L120.0,190.0 L136.0,199.4 L150.0,205.0 L159.8,209.6 L166.6,223.2 L163.0,235.0 L159.8,243.6 L153.0,255.0 L146.0,264.0 L138.0,280.0 L129.2,298.0 L120.0,306.0 L112.2,311.6 L103.0,322.0 L95.2,332.0 L85.7,340.0 L81.6,349.0 L75.0,356.0 L71.0,358.0 L60.0,366.0 L50.0,372.0 L46.0,376.0 L42.0,386.0 L39.6,394.0 L36.0,404.0 L33.0,414.0 L30.0,424.0 L28.0,434.0 L24.0,441.0 L20.0,447.0 L24.0,452.0 L30.0,458.0 L31.0,466.0 L28.0,472.0 L18.0,474.0 L9.0,474.0 Z"/></clipPath><filter id="b2" x="-20%" y="-20%" width="140%" height="140%"><feGaussianBlur stdDeviation="1.3"/></filter><filter id="b5" x="-30%" y="-30%" width="160%" height="160%"><feGaussianBlur stdDeviation="6"/></filter><filter id="b14" x="-50%" y="-50%" width="200%" height="200%"><feGaussianBlur stdDeviation="14"/></filter><filter id="noise" x="0" y="0" width="100%" height="100%"><feTurbulence type="fractalNoise" baseFrequency="0.2" numOctaves="3" seed="7" result="n"/><feColorMatrix in="n" type="matrix" values="0 0 0 0 0.08  0 0 0 0 0.07  0 0 0 0 0.04  1.6 0 0 0 -0.55"/></filter><filter id="noise2" x="0" y="0" width="100%" height="100%"><feTurbulence type="fractalNoise" baseFrequency="0.13" numOctaves="2" seed="23" result="n"/><feColorMatrix in="n" type="matrix" values="0 0 0 0 0.85  0 0 0 0 0.78  0 0 0 0 0.62  0 1.5 0 0 -0.62"/></filter></defs><rect x="8.6" y="8.8" width="611.3" height="611.2" fill="#5b5f63"/><g clip-path="url(#mapclip)"><rect x="0" y="0" width="640" height="640" fill="#030e1d"/><radialGradient id="og0"><stop offset="0" stop-color="#0a1f36" stop-opacity="0.75"/><stop offset=".55" stop-color="#0a1f36" stop-opacity="0.41"/><stop offset="1" stop-color="#0a1f36" stop-opacity="0"/></radialGradient><ellipse cx="120" cy="90" rx="150" ry="80" fill="url(#og0)"/><radialGradient id="og1"><stop offset="0" stop-color="#071a2f" stop-opacity="0.6"/><stop offset=".55" stop-color="#071a2f" stop-opacity="0.33"/><stop offset="1" stop-color="#071a2f" stop-opacity="0"/></radialGradient><ellipse cx="230" cy="330" rx="150" ry="110" fill="url(#og1)"/><radialGradient id="og2"><stop offset="0" stop-color="#08203a" stop-opacity="0.55"/><stop offset=".55" stop-color="#08203a" stop-opacity="0.30"/><stop offset="1" stop-color="#08203a" stop-opacity="0"/></radialGradient><ellipse cx="565" cy="300" rx="70" ry="130" fill="url(#og2)"/><radialGradient id="og3"><stop offset="0" stop-color="#0b2339" stop-opacity="0.6"/><stop offset=".55" stop-color="#0b2339" stop-opacity="0.33"/><stop offset="1" stop-color="#0b2339" stop-opacity="0"/></radialGradient><ellipse cx="300" cy="570" rx="260" ry="70" fill="url(#og3)"/><radialGradient id="og4"><stop offset="0" stop-color="#06182c" stop-opacity="0.5"/><stop offset=".55" stop-color="#06182c" stop-opacity="0.28"/><stop offset="1" stop-color="#06182c" stop-opacity="0"/></radialGradient><ellipse cx="560" cy="440" rx="90" ry="90" fill="url(#og4)"/><radialGradient id="og5"><stop offset="0" stop-color="#1d3d58" stop-opacity="0.85"/><stop offset=".55" stop-color="#1d3d58" stop-opacity="0.47"/><stop offset="1" stop-color="#1d3d58" stop-opacity="0"/></radialGradient><ellipse cx="70" cy="440" rx="60" ry="90" fill="url(#og5)"/><radialGradient id="og6"><stop offset="0" stop-color="#0d2840" stop-opacity="0.5"/><stop offset=".55" stop-color="#0d2840" stop-opacity="0.28"/><stop offset="1" stop-color="#0d2840" stop-opacity="0"/></radialGradient><ellipse cx="150" cy="520" rx="120" ry="60" fill="url(#og6)"/><radialGradient id="og7"><stop offset="0" stop-color="#0f2b44" stop-opacity="0.6"/><stop offset=".55" stop-color="#0f2b44" stop-opacity="0.33"/><stop offset="1" stop-color="#0f2b44" stop-opacity="0"/></radialGradient><ellipse cx="125" cy="478" rx="100" ry="42" fill="url(#og7)"/><radialGradient id="og8"><stop offset="0" stop-color="#0a2036" stop-opacity="0.7"/><stop offset=".55" stop-color="#0a2036" stop-opacity="0.39"/><stop offset="1" stop-color="#0a2036" stop-opacity="0"/></radialGradient><ellipse cx="425" cy="32" rx="50" ry="14" fill="url(#og8)"/><g filter="url(#b5)" opacity=".22"><path d="M281.4,39.0 L290.0,33.0 L300.0,30.0 L314.5,27.2 L326.3,23.0 L338.0,21.3 L349.9,20.0 L358.1,21.3 L361.1,28.3 L359.3,35.4 L363.4,40.1 L373.5,44.9 L385.3,49.6 L397.1,53.1 L401.8,47.2 L408.9,43.7 L420.7,46.0 L437.7,50.8 L453.0,52.0 L462.0,56.0 L459.0,67.3 L464.9,80.3 L472.0,93.3 L474.3,100.0 L477.9,109.4 L482.6,121.3 L490.8,130.7 L497.9,137.8 L501.5,143.7 L509.7,143.7 L521.5,141.3 L532.2,139.0 L533.3,143.7 L531.0,150.8 L526.3,161.4 L520.4,170.8 L509.7,182.6 L497.9,192.1 L488.5,200.4 L483.8,209.8 L482.6,221.0 L487.0,234.4 L488.1,248.0 L483.6,261.6 L472.3,270.7 L466.6,279.7 L466.6,286.5 L465.5,293.3 L458.7,302.4 L455.0,310.0 L448.0,322.0 L440.0,333.0 L430.0,340.0 L422.4,343.2 L406.5,346.6 L395.2,344.3 L390.7,331.9 L383.9,316.0 L377.0,297.9 L370.3,279.7 L364.6,263.9 L368.0,248.0 L372.5,232.0 L368.0,216.3 L362.0,205.0 L365.8,191.2 L361.2,177.3 L352.0,165.8 L338.2,161.2 L324.4,162.4 L310.5,167.0 L296.7,171.6 L280.6,170.4 L269.1,163.5 L257.6,154.3 L248.4,142.8 L243.8,135.9 L242.6,129.0 L242.6,110.5 L243.6,98.0 L245.4,89.7 L250.7,76.7 L259.0,66.1 L269.6,56.7 L275.5,47.2 Z" fill="#1a3c58" stroke="#1a3c58" stroke-width="5"/><path d="M524.4,243.5 L528.9,257.0 L526.5,268.0 L523.3,277.5 L519.5,288.0 L515.3,297.9 L508.5,303.5 L502.9,297.9 L500.6,284.3 L502.0,276.0 L505.1,268.4 L510.0,262.0 L515.3,257.0 L520.0,249.0 Z" fill="#1a3c58" stroke="#1a3c58" stroke-width="5"/><path d="M404.0,9.5 L408.0,14.0 L415.0,18.0 L425.0,17.0 L431.8,19.5 L440.0,21.5 L449.5,22.8 L460.0,24.0 L467.2,23.6 L466.0,30.0 L463.0,40.0 L461.0,48.0 L457.0,53.0 L464.0,60.0 L467.2,66.0 L473.1,76.7 L480.2,91.0 L483.8,100.0 L490.8,109.4 L496.7,118.9 L499.1,130.7 L501.5,135.4 L514.5,130.7 L526.3,127.2 L538.1,121.3 L549.9,115.3 L559.3,108.6 L565.2,101.5 L569.9,94.5 L564.0,89.7 L557.0,82.6 L554.0,74.4 L551.0,77.9 L545.1,82.6 L538.1,82.6 L532.2,76.7 L526.3,68.5 L520.4,59.0 L522.0,55.0 L523.9,54.3 L533.3,61.4 L540.4,69.7 L549.9,73.2 L557.0,70.8 L561.7,76.7 L575.8,79.1 L591.2,80.3 L604.2,82.6 L608.9,89.7 L613.6,98.0 L620.0,101.5 L620.0,9.5 L545.0,9.5 L545.0,17.0 L540.0,21.0 L530.0,21.0 L524.0,17.0 L524.0,9.5 Z" fill="#1a3c58" stroke="#1a3c58" stroke-width="5"/><path d="M9.0,138.0 L20.0,140.0 L34.0,145.0 L54.4,155.2 L70.0,160.0 L85.0,165.4 L102.0,179.0 L120.0,190.0 L136.0,199.4 L150.0,205.0 L159.8,209.6 L166.6,223.2 L163.0,235.0 L159.8,243.6 L153.0,255.0 L146.0,264.0 L138.0,280.0 L129.2,298.0 L120.0,306.0 L112.2,311.6 L103.0,322.0 L95.2,332.0 L85.7,340.0 L81.6,349.0 L75.0,356.0 L71.0,358.0 L60.0,366.0 L50.0,372.0 L46.0,376.0 L42.0,386.0 L39.6,394.0 L36.0,404.0 L33.0,414.0 L30.0,424.0 L28.0,434.0 L24.0,441.0 L20.0,447.0 L24.0,452.0 L30.0,458.0 L31.0,466.0 L28.0,472.0 L18.0,474.0 L9.0,474.0 Z" fill="#1a3c58" stroke="#1a3c58" stroke-width="5"/></g><g filter="url(#b2)"><g><path d="M281.4,39.0 L290.0,33.0 L300.0,30.0 L314.5,27.2 L326.3,23.0 L338.0,21.3 L349.9,20.0 L358.1,21.3 L361.1,28.3 L359.3,35.4 L363.4,40.1 L373.5,44.9 L385.3,49.6 L397.1,53.1 L401.8,47.2 L408.9,43.7 L420.7,46.0 L437.7,50.8 L453.0,52.0 L462.0,56.0 L459.0,67.3 L464.9,80.3 L472.0,93.3 L474.3,100.0 L477.9,109.4 L482.6,121.3 L490.8,130.7 L497.9,137.8 L501.5,143.7 L509.7,143.7 L521.5,141.3 L532.2,139.0 L533.3,143.7 L531.0,150.8 L526.3,161.4 L520.4,170.8 L509.7,182.6 L497.9,192.1 L488.5,200.4 L483.8,209.8 L482.6,221.0 L487.0,234.4 L488.1,248.0 L483.6,261.6 L472.3,270.7 L466.6,279.7 L466.6,286.5 L465.5,293.3 L458.7,302.4 L455.0,310.0 L448.0,322.0 L440.0,333.0 L430.0,340.0 L422.4,343.2 L406.5,346.6 L395.2,344.3 L390.7,331.9 L383.9,316.0 L377.0,297.9 L370.3,279.7 L364.6,263.9 L368.0,248.0 L372.5,232.0 L368.0,216.3 L362.0,205.0 L365.8,191.2 L361.2,177.3 L352.0,165.8 L338.2,161.2 L324.4,162.4 L310.5,167.0 L296.7,171.6 L280.6,170.4 L269.1,163.5 L257.6,154.3 L248.4,142.8 L243.8,135.9 L242.6,129.0 L242.6,110.5 L243.6,98.0 L245.4,89.7 L250.7,76.7 L259.0,66.1 L269.6,56.7 L275.5,47.2 Z" fill="#6a6a4c" stroke="#55563f" stroke-width="1.2"/><path d="M524.4,243.5 L528.9,257.0 L526.5,268.0 L523.3,277.5 L519.5,288.0 L515.3,297.9 L508.5,303.5 L502.9,297.9 L500.6,284.3 L502.0,276.0 L505.1,268.4 L510.0,262.0 L515.3,257.0 L520.0,249.0 Z" fill="#6a6a4c" stroke="#55563f" stroke-width="1.2"/><path d="M404.0,9.5 L408.0,14.0 L415.0,18.0 L425.0,17.0 L431.8,19.5 L440.0,21.5 L449.5,22.8 L460.0,24.0 L467.2,23.6 L466.0,30.0 L463.0,40.0 L461.0,48.0 L457.0,53.0 L464.0,60.0 L467.2,66.0 L473.1,76.7 L480.2,91.0 L483.8,100.0 L490.8,109.4 L496.7,118.9 L499.1,130.7 L501.5,135.4 L514.5,130.7 L526.3,127.2 L538.1,121.3 L549.9,115.3 L559.3,108.6 L565.2,101.5 L569.9,94.5 L564.0,89.7 L557.0,82.6 L554.0,74.4 L551.0,77.9 L545.1,82.6 L538.1,82.6 L532.2,76.7 L526.3,68.5 L520.4,59.0 L522.0,55.0 L523.9,54.3 L533.3,61.4 L540.4,69.7 L549.9,73.2 L557.0,70.8 L561.7,76.7 L575.8,79.1 L591.2,80.3 L604.2,82.6 L608.9,89.7 L613.6,98.0 L620.0,101.5 L620.0,9.5 L545.0,9.5 L545.0,17.0 L540.0,21.0 L530.0,21.0 L524.0,17.0 L524.0,9.5 Z" fill="#6a6a4c" stroke="#55563f" stroke-width="1.2"/><path d="M9.0,138.0 L20.0,140.0 L34.0,145.0 L54.4,155.2 L70.0,160.0 L85.0,165.4 L102.0,179.0 L120.0,190.0 L136.0,199.4 L150.0,205.0 L159.8,209.6 L166.6,223.2 L163.0,235.0 L159.8,243.6 L153.0,255.0 L146.0,264.0 L138.0,280.0 L129.2,298.0 L120.0,306.0 L112.2,311.6 L103.0,322.0 L95.2,332.0 L85.7,340.0 L81.6,349.0 L75.0,356.0 L71.0,358.0 L60.0,366.0 L50.0,372.0 L46.0,376.0 L42.0,386.0 L39.6,394.0 L36.0,404.0 L33.0,414.0 L30.0,424.0 L28.0,434.0 L24.0,441.0 L20.0,447.0 L24.0,452.0 L30.0,458.0 L31.0,466.0 L28.0,472.0 L18.0,474.0 L9.0,474.0 Z" fill="#6a6a4c" stroke="#55563f" stroke-width="1.2"/></g></g><g clip-path="url(#landclip)"><ellipse cx="350" cy="85" rx="130" ry="50" fill="#857a5f" opacity="1" filter="url(#b5)"/><ellipse cx="480" cy="80" rx="50" ry="45" fill="#8a7d62" opacity="1" filter="url(#b5)"/><ellipse cx="570" cy="45" rx="60" ry="35" fill="#7c7157" opacity="1" filter="url(#b5)"/><ellipse cx="440" cy="15" rx="40" ry="10" fill="#6a6a4a" opacity="1" filter="url(#b5)"/><ellipse cx="410" cy="200" rx="75" ry="50" fill="#4e5f3b" opacity="1" filter="url(#b5)"/><ellipse cx="300" cy="150" rx="55" ry="18" fill="#566640" opacity="1" filter="url(#b5)"/><ellipse cx="450" cy="150" rx="50" ry="30" fill="#65704a" opacity="1" filter="url(#b5)"/><ellipse cx="500" cy="165" rx="35" ry="35" fill="#8a7b5e" opacity="0.9" filter="url(#b5)"/><ellipse cx="430" cy="290" rx="55" ry="55" fill="#6a7050" opacity="1" filter="url(#b5)"/><ellipse cx="390" cy="300" rx="20" ry="45" fill="#857a5c" opacity="0.8" filter="url(#b5)"/><ellipse cx="515" cy="275" rx="14" ry="30" fill="#66744a" opacity="1" filter="url(#b5)"/><ellipse cx="60" cy="220" rx="70" ry="60" fill="#3f5a36" opacity="1" filter="url(#b5)"/><ellipse cx="130" cy="240" rx="45" ry="50" fill="#69724c" opacity="1" filter="url(#b5)"/><ellipse cx="60" cy="340" rx="45" ry="50" fill="#6b764e" opacity="1" filter="url(#b5)"/><ellipse cx="25" cy="430" rx="25" ry="50" fill="#918a6e" opacity="1" filter="url(#b5)"/><ellipse cx="20" cy="170" rx="30" ry="25" fill="#45603a" opacity="1" filter="url(#b5)"/><rect x="0" y="0" width="640" height="640" filter="url(#noise)" opacity=".42"/><rect x="0" y="0" width="640" height="640" filter="url(#noise2)" opacity=".35"/></g><ellipse cx="451.8" cy="196" rx="3.8" ry="4.6" fill="#02060c"/><g filter="url(#b2)"><path d="M9.0,620.0 L9.0,598.0 L20.0,585.0 L30.0,565.0 L45.0,553.0 L60.0,547.0 L79.0,540.0 L70.0,550.0 L58.0,563.0 L52.0,580.0 L55.0,600.0 L56.0,620.0 Z" fill="#e9edf3"/><path d="M468.0,620.0 L478.0,613.0 L496.0,600.0 L508.0,590.5 L520.0,583.0 L531.0,577.0 L549.0,569.0 L566.0,575.0 L583.0,584.0 L600.0,589.0 L612.0,588.0 L620.0,593.0 L620.0,620.0 Z" fill="#eef0f5"/></g><ellipse cx="410" cy="615" rx="45" ry="6" fill="#9fb0c0" opacity=".35" filter="url(#b2)"/><path d="M307.4,33.6 L309.7,43.7 L302.6,46.0 L297.9,50.8 L290.8,56.7 L283.8,57.9 L277.9,62.6 L277.3,67.3" fill="none" stroke="#ffffff" stroke-width="1.4" stroke-linejoin="round" opacity=".95"/><path d="M257.8,67.1 L277.3,67.1" fill="none" stroke="#ffffff" stroke-width="2.2" stroke-dasharray="4 2.6"/><path d="M277.3,67.3 L277.9,73.8 L263.7,74.4 L261.9,87.4 L258.4,89.7 L258.4,97.4 L241.8,97.4" fill="none" stroke="#ffffff" stroke-width="1.4" stroke-linejoin="round" opacity=".95"/><path d="M277.9,68.5 L322.7,101.5 L327.4,102.7 L328.6,106.8" fill="none" stroke="#ffffff" stroke-width="1.4" stroke-linejoin="round" opacity=".95"/><path d="M286.7,80.3 L291.4,120.4 L264.9,122.8 L259.0,125.0" fill="none" stroke="#ffffff" stroke-width="1.4" stroke-linejoin="round" opacity=".95"/><path d="M244.2,118.7 L251.9,118.1 L257.8,122.8" fill="none" stroke="#ffffff" stroke-width="1.4" stroke-linejoin="round" opacity=".95"/><path d="M351.1,20.1 L349.9,28.3 L346.9,35.4 L352.2,43.7 L355.2,53.1 L355.8,69.7 L357.0,77.9 L365.2,86.8" fill="none" stroke="#ffffff" stroke-width="1.4" stroke-linejoin="round" opacity=".95"/><path d="M355.2,53.1 L359.3,46.0 L363.4,42.5 L363.8,39.6" fill="none" stroke="#ffffff" stroke-width="1.4" stroke-linejoin="round" opacity=".95"/><path d="M328.6,106.8 L339.2,103.9 L365.2,86.8" fill="none" stroke="#ffffff" stroke-width="1.4" stroke-linejoin="round" opacity=".95"/><path d="M365.2,86.8 L374.7,89.7 L382.9,86.8 L416.0,103.9" fill="none" stroke="#ffffff" stroke-width="1.4" stroke-linejoin="round" opacity=".95"/><path d="M377.0,89.7 L381.7,100.4 L380.6,113.3 L373.5,125.0" fill="none" stroke="#ffffff" stroke-width="1.4" stroke-linejoin="round" opacity=".95"/><path d="M420.7,46.6 L419.5,59.0 L420.7,102.7 L416.0,103.9 L416.0,120.4 L412.4,125.0" fill="none" stroke="#ffffff" stroke-width="1.4" stroke-linejoin="round" opacity=".95"/><path d="M421.3,93.9 L440.1,93.9" fill="none" stroke="#ffffff" stroke-width="1.4" stroke-linejoin="round" opacity=".95"/><path d="M328.6,106.8 L332.8,106.8 L332.2,119.2 L326.3,125.0" fill="none" stroke="#ffffff" stroke-width="1.4" stroke-linejoin="round" opacity=".95"/><path d="M420.0,93.3 L471.9,93.3" fill="none" stroke="#ffffff" stroke-width="1.4" stroke-linejoin="round" opacity=".95"/><path d="M467.2,25.4 L470.8,20.7 L486.1,17.7 L502.6,16.5" fill="none" stroke="#ffffff" stroke-width="1.4" stroke-linejoin="round" opacity=".95"/><path d="M502.6,10.0 L505.0,17.7 L510.9,27.2" fill="none" stroke="#ffffff" stroke-width="1.4" stroke-linejoin="round" opacity=".95"/><path d="M545.1,17.7 L555.8,12.4 L568.8,17.7 L575.8,24.8 L572.3,35.4 L575.8,47.2 L573.5,56.7 L580.6,66.1 L582.9,70.8 L577.0,73.2 L575.8,79.1" fill="none" stroke="#ffffff" stroke-width="1.4" stroke-linejoin="round" opacity=".95"/><path d="M575.8,28.3 L585.3,26.0 L591.2,18.9 L604.2,16.5 L606.5,10.0" fill="none" stroke="#ffffff" stroke-width="1.4" stroke-linejoin="round" opacity=".95"/><path d="M575.8,56.7 L590.0,57.9 L597.1,50.8 L608.9,44.9 L614.8,33.1 L618.3,30.7" fill="none" stroke="#ffffff" stroke-width="1.4" stroke-linejoin="round" opacity=".95"/><path d="M618.3,64.9 L611.3,70.8 L614.8,80.3 L605.4,84.4" fill="none" stroke="#ffffff" stroke-width="1.4" stroke-linejoin="round" opacity=".95"/><path d="M531.0,80.9 L538.1,88.5 L549.9,90.3 L554.0,75.6" fill="none" stroke="#ffffff" stroke-width="1.4" stroke-linejoin="round" opacity=".95"/><path d="M549.9,90.3 L551.1,96.8 L547.5,102.7 L535.7,106.8 L522.7,108.6 L515.6,114.5 L499.1,113.3 L496.7,118.1" fill="none" stroke="#ffffff" stroke-width="1.4" stroke-linejoin="round" opacity=".95"/><path d="M536.3,106.8 L541.0,118.1" fill="none" stroke="#ffffff" stroke-width="1.4" stroke-linejoin="round" opacity=".95"/><path d="M592.4,10.0 L597.1,15.3 L604.2,17.7 L613.6,11.8 L618.3,10.0" fill="none" stroke="#ffffff" stroke-width="1.4" stroke-linejoin="round" opacity=".95"/><path d="M479.0,111.2 L473.1,115.3 L470.8,127.2" fill="none" stroke="#ffffff" stroke-width="1.4" stroke-linejoin="round" opacity=".95"/><path d="M470.8,127.2 L476.7,125.4 L486.1,128.3 L493.2,135.4 L499.1,135.4" fill="none" stroke="#ffffff" stroke-width="1.4" stroke-linejoin="round" opacity=".95"/><path d="M493.2,135.4 L493.8,141.3 L499.1,140.7" fill="none" stroke="#ffffff" stroke-width="1.4" stroke-linejoin="round" opacity=".95"/><path d="M470.8,127.2 L464.9,139.0 L459.0,147.2 L460.1,151.9 L456.6,155.5 L463.7,167.3" fill="none" stroke="#ffffff" stroke-width="1.4" stroke-linejoin="round" opacity=".95"/><path d="M420.0,147.2 L427.1,146.6 L434.2,147.2 L443.6,146.0 L451.9,137.8 L455.4,137.8 L456.6,144.9 L459.0,147.2" fill="none" stroke="#ffffff" stroke-width="1.4" stroke-linejoin="round" opacity=".95"/><path d="M495.6,141.9 L500.3,149.6 L516.8,156.1" fill="none" stroke="#ffffff" stroke-width="1.4" stroke-linejoin="round" opacity=".95"/><path d="M516.8,156.1 L512.1,161.4 L502.6,168.5 L493.2,172.0" fill="none" stroke="#ffffff" stroke-width="2.6" stroke-dasharray="4.5 4"/><path d="M463.7,167.3 L471.9,170.8 L483.8,174.4 L490.8,172.0" fill="none" stroke="#ffffff" stroke-width="1.4" stroke-linejoin="round" opacity=".95"/><path d="M490.8,172.0 L489.1,180.3 L489.7,192.1 L492.0,196.8" fill="none" stroke="#ffffff" stroke-width="1.4" stroke-linejoin="round" opacity=".95"/><path d="M420.0,167.3 L429.4,167.3 L437.7,170.8 L446.0,173.8 L460.1,170.8 L463.7,167.3" fill="none" stroke="#ffffff" stroke-width="1.4" stroke-linejoin="round" opacity=".95"/><path d="M446.0,173.8 L447.2,180.3 L442.4,187.4 L441.3,194.5 L437.7,200.4 L440.1,208.6 L441.3,218.1 L444.8,225.0" fill="none" stroke="#ffffff" stroke-width="1.4" stroke-linejoin="round" opacity=".95"/><path d="M460.1,170.8 L463.7,180.3 L459.0,189.7 L459.0,193.9" fill="none" stroke="#ffffff" stroke-width="1.4" stroke-linejoin="round" opacity=".95"/><path d="M441.3,193.9 L459.0,193.9" fill="none" stroke="#ffffff" stroke-width="1.4" stroke-linejoin="round" opacity=".95"/><path d="M459.0,193.9 L474.3,203.9 L482.0,210.4" fill="none" stroke="#ffffff" stroke-width="1.4" stroke-linejoin="round" opacity=".95"/><path d="M242.6,132.4 L257.6,129.0 L269.1,138.2 L276.0,135.9" fill="none" stroke="#ffffff" stroke-width="1.4" stroke-linejoin="round" opacity=".95"/><path d="M242.6,135.9 L255.3,134.7 L259.9,147.4 L269.1,149.7 L276.0,161.2 L280.6,170.4" fill="none" stroke="#ffffff" stroke-width="1.4" stroke-linejoin="round" opacity=".95"/><path d="M292.1,120.9 L264.5,123.2 L262.2,131.3" fill="none" stroke="#ffffff" stroke-width="1.4" stroke-linejoin="round" opacity=".95"/><path d="M292.1,138.2 L299.0,129.0 L315.2,125.5 L319.8,133.6 L329.0,138.2 L324.4,147.4 L325.5,161.2" fill="none" stroke="#ffffff" stroke-width="1.4" stroke-linejoin="round" opacity=".95"/><path d="M301.3,142.8 L302.5,165.8" fill="none" stroke="#ffffff" stroke-width="1.4" stroke-linejoin="round" opacity=".95"/><path d="M314.0,141.6 L315.2,162.4" fill="none" stroke="#ffffff" stroke-width="1.4" stroke-linejoin="round" opacity=".95"/><path d="M318.6,141.6 L319.8,161.2" fill="none" stroke="#ffffff" stroke-width="1.4" stroke-linejoin="round" opacity=".95"/><path d="M329.0,138.2 L333.6,131.3 L347.4,133.6 L361.2,132.4 L372.7,131.3 L377.3,138.2" fill="none" stroke="#ffffff" stroke-width="1.4" stroke-linejoin="round" opacity=".95"/><path d="M377.3,138.2 L370.4,149.7 L361.2,161.2 L358.9,165.8" fill="none" stroke="#ffffff" stroke-width="1.4" stroke-linejoin="round" opacity=".95"/><path d="M372.7,131.3 L381.9,108.2 L379.2,91.0" fill="none" stroke="#ffffff" stroke-width="1.4" stroke-linejoin="round" opacity=".95"/><path d="M416.5,103.6 L415.3,122.1 L407.3,135.9 L411.9,145.1" fill="none" stroke="#ffffff" stroke-width="1.4" stroke-linejoin="round" opacity=".95"/><path d="M377.3,138.2 L384.2,156.6 L407.3,142.8 L411.9,145.1" fill="none" stroke="#ffffff" stroke-width="1.4" stroke-linejoin="round" opacity=".95"/><path d="M411.9,145.1 L430.3,147.4 L453.3,138.2 L460.2,147.4" fill="none" stroke="#ffffff" stroke-width="1.4" stroke-linejoin="round" opacity=".95"/><path d="M377.3,165.8 L395.8,169.3 L418.8,167.0 L444.1,171.6 L460.2,170.4" fill="none" stroke="#ffffff" stroke-width="1.4" stroke-linejoin="round" opacity=".95"/><path d="M365.8,184.2 L384.2,181.9 L391.2,175.0 L377.3,165.8" fill="none" stroke="#ffffff" stroke-width="1.4" stroke-linejoin="round" opacity=".95"/><path d="M391.2,175.0 L386.5,195.8 L381.9,207.3 L368.1,214.2" fill="none" stroke="#ffffff" stroke-width="1.4" stroke-linejoin="round" opacity=".95"/><path d="M365.8,198.1 L375.0,195.8 L376.2,188.9" fill="none" stroke="#ffffff" stroke-width="1.4" stroke-linejoin="round" opacity=".95"/><path d="M368.1,214.2 L384.2,214.2 L391.2,223.4 L405.0,221.1 L409.6,237.2 L430.3,239.5" fill="none" stroke="#ffffff" stroke-width="1.4" stroke-linejoin="round" opacity=".95"/><path d="M444.1,171.6 L447.6,184.2 L439.5,200.4 L441.8,214.2 L437.2,225.7 L444.1,240.0" fill="none" stroke="#ffffff" stroke-width="1.4" stroke-linejoin="round" opacity=".95"/><path d="M365.7,214.0 L386.1,215.1 L388.4,223.1 L397.5,224.2 L398.6,219.7 L406.5,220.8 L408.8,236.7 L416.7,237.8" fill="none" stroke="#ffffff" stroke-width="1.4" stroke-linejoin="round" opacity=".95"/><path d="M416.7,237.8 L415.6,245.7 L407.7,245.7 L408.8,259.3 L413.3,266.1" fill="none" stroke="#ffffff" stroke-width="1.4" stroke-linejoin="round" opacity=".95"/><path d="M364.6,263.9 L392.9,265.0 L413.3,267.3 L422.4,266.1" fill="none" stroke="#ffffff" stroke-width="1.4" stroke-linejoin="round" opacity=".95"/><path d="M404.3,268.4 L403.8,285.4 L399.7,286.5 L399.3,316.0 L390.7,318.3 L385.0,317.1" fill="none" stroke="#ffffff" stroke-width="1.4" stroke-linejoin="round" opacity=".95"/><path d="M422.4,266.1 L431.5,279.7 L440.5,286.5 L449.6,284.3" fill="none" stroke="#ffffff" stroke-width="1.4" stroke-linejoin="round" opacity=".95"/><path d="M416.7,237.8 L429.2,240.1 L436.0,242.3 L438.3,246.9 L441.7,246.9 L440.5,238.9 L436.0,234.4 L438.3,226.5 L447.3,225.3 L458.7,229.9" fill="none" stroke="#ffffff" stroke-width="1.4" stroke-linejoin="round" opacity=".95"/><path d="M413.3,266.1 L426.9,267.3 L436.0,259.3 L445.1,257.1" fill="none" stroke="#ffffff" stroke-width="1.4" stroke-linejoin="round" opacity=".95"/><path d="M445.1,257.1 L454.1,261.6 L455.3,275.2 L449.6,284.3" fill="none" stroke="#ffffff" stroke-width="1.4" stroke-linejoin="round" opacity=".95"/><path d="M458.7,229.9 L456.4,248.0 L463.2,257.1 L467.7,254.8 L463.2,245.7 L462.1,236.7" fill="none" stroke="#ffffff" stroke-width="1.4" stroke-linejoin="round" opacity=".95"/><path d="M462.1,240.1 L476.8,237.8 L487.0,234.4" fill="none" stroke="#ffffff" stroke-width="1.4" stroke-linejoin="round" opacity=".95"/><path d="M440.5,193.6 L438.3,204.9 L442.8,218.5 L447.3,225.3" fill="none" stroke="#ffffff" stroke-width="1.4" stroke-linejoin="round" opacity=".95"/><path d="M458.7,193.6 L470.0,199.3 L481.3,209.5" fill="none" stroke="#ffffff" stroke-width="1.4" stroke-linejoin="round" opacity=".95"/><path d="M445.1,257.1 L442.8,253.7 L456.4,250.3" fill="none" stroke="#ffffff" stroke-width="1.4" stroke-linejoin="round" opacity=".95"/><path d="M9.5,160.3 L23.8,162.0 L27.2,175.6 L35.7,182.4 L42.5,172.2" fill="none" stroke="#ffffff" stroke-width="1.4" stroke-linejoin="round" opacity=".95"/><path d="M9.5,206.2 L15.3,202.8 L18.7,185.8 L27.2,179.0" fill="none" stroke="#ffffff" stroke-width="1.4" stroke-linejoin="round" opacity=".95"/><path d="M9.5,233.4 L20.4,236.8 L34.0,231.7 L37.4,243.6 L20.4,250.4 L17.0,264.0 L23.8,277.6 L27.2,291.2 L47.6,281.0 L51.0,274.2 L66.3,272.5 L68.0,260.6" fill="none" stroke="#ffffff" stroke-width="1.4" stroke-linejoin="round" opacity=".95"/><path d="M47.6,281.0 L64.6,298.0 L78.2,291.2 L83.3,298.0 L81.6,308.2 L66.3,311.6 L62.9,303.1" fill="none" stroke="#ffffff" stroke-width="1.4" stroke-linejoin="round" opacity=".95"/><path d="M27.2,291.2 L20.4,311.6 L13.6,332.0 L11.9,365.9" fill="none" stroke="#ffffff" stroke-width="1.4" stroke-linejoin="round" opacity=".95"/><path d="M81.6,308.2 L71.4,325.2 L85.0,335.4 L88.4,342.1" fill="none" stroke="#ffffff" stroke-width="1.4" stroke-linejoin="round" opacity=".95"/><circle cx="456.6" cy="29.5" r="1.6" fill="#fff"/><text x="84" y="54.9" font-size="15.6" font-style="italic" fill="#7f9cba" textLength="118.5" lengthAdjust="spacing">Atlantic Ocean</text><text x="602.3" y="286.2" font-size="15.6" font-style="italic" fill="#7f9cba" letter-spacing="1">Ind</text><text x="393.6" y="165.2" font-size="17.4" font-weight="bold" fill="#f1f1f1" stroke="#4a4648" stroke-width="2.6" paint-order="stroke" stroke-linejoin="round" textLength="59.6" lengthAdjust="spacingAndGlyphs">AFRICA</text><text x="31.9" y="259.5" font-size="16.6" font-weight="bold" fill="#f1f1f1" stroke="#4a4648" stroke-width="2.6" paint-order="stroke" stroke-linejoin="round" textLength="135" lengthAdjust="spacingAndGlyphs">SOUTH AMERICA</text><circle cx="145.7" cy="25.7" r="21.9" fill="#dfeb9f"/><circle cx="345.6" cy="183.4" r="21" fill="#525d81" stroke="#e8eaf0" stroke-width="1.2"/><circle cx="290.8" cy="7.4" r="27.3" fill="#c9503a" stroke="#ffffff" stroke-width="3.9"/><text x="290.8" y="15.4" font-size="22" fill="#ffffff" text-anchor="middle">11</text><circle cx="489.4" cy="50.5" r="27.3" fill="#c9503a" stroke="#ffffff" stroke-width="3.9"/><text x="489.4" y="58.5" font-size="22" fill="#ffffff" text-anchor="middle">22</text><circle cx="13.7" cy="110.7" r="27.3" fill="#c9503a" stroke="#ffffff" stroke-width="3.9"/><text x="13.7" y="118.7" font-size="22" fill="#ffffff" text-anchor="middle">34</text><circle cx="68.6" cy="189.6" r="27.3" fill="#c9503a" stroke="#ffffff" stroke-width="3.9"/><text x="68.6" y="197.6" font-size="22" fill="#ffffff" text-anchor="middle">3</text><circle cx="136.4" cy="276" r="27.3" fill="#c9503a" stroke="#ffffff" stroke-width="3.9"/><text x="136.4" y="284" font-size="22" fill="#ffffff" text-anchor="middle">11</text><circle cx="42.9" cy="337.7" r="27.3" fill="#c9503a" stroke="#ffffff" stroke-width="3.9"/><text x="42.9" y="345.7" font-size="22" fill="#ffffff" text-anchor="middle">8</text><circle cx="431.9" cy="316" r="27.3" fill="#c9503a" stroke="#ffffff" stroke-width="3.9"/><text x="431.9" y="324" font-size="22" fill="#ffffff" text-anchor="middle">7</text><text x="183.6" y="608.7" font-size="12.6" fill="#26292c" fill-opacity=".92" textLength="73.7" lengthAdjust="spacingAndGlyphs">©2024 OSM</text><text x="264.2" y="608.7" font-size="12.6" fill="#26292c" fill-opacity=".92" textLength="94.3" lengthAdjust="spacingAndGlyphs">©2024 TomTom</text><text x="365.29999999999995" y="608.7" font-size="12.6" fill="#26292c" fill-opacity=".92" textLength="177.3" lengthAdjust="spacingAndGlyphs">©2024 EarthStar Geographics</text><text x="549.4" y="608.7" font-size="12.6" fill="#26292c" fill-opacity=".92" textLength="55.5" lengthAdjust="spacingAndGlyphs">Feedback</text><rect x="549.2" y="611" width="55.5" height="1.2" fill="#55585c"/><text x="182.7" y="607.8" font-size="12.6" fill="#ffffff" textLength="73.7" lengthAdjust="spacingAndGlyphs">©2024 OSM</text><text x="263.3" y="607.8" font-size="12.6" fill="#ffffff" textLength="94.3" lengthAdjust="spacingAndGlyphs">©2024 TomTom</text><text x="364.4" y="607.8" font-size="12.6" fill="#ffffff" textLength="177.3" lengthAdjust="spacingAndGlyphs">©2024 EarthStar Geographics</text><text x="548.5" y="607.8" font-size="12.6" fill="#ffffff" textLength="55.5" lengthAdjust="spacingAndGlyphs">Feedback</text><rect x="548.5" y="610" width="55.5" height="1" fill="#ffffff" fill-opacity=".85"/></g></svg>
</body></html>
